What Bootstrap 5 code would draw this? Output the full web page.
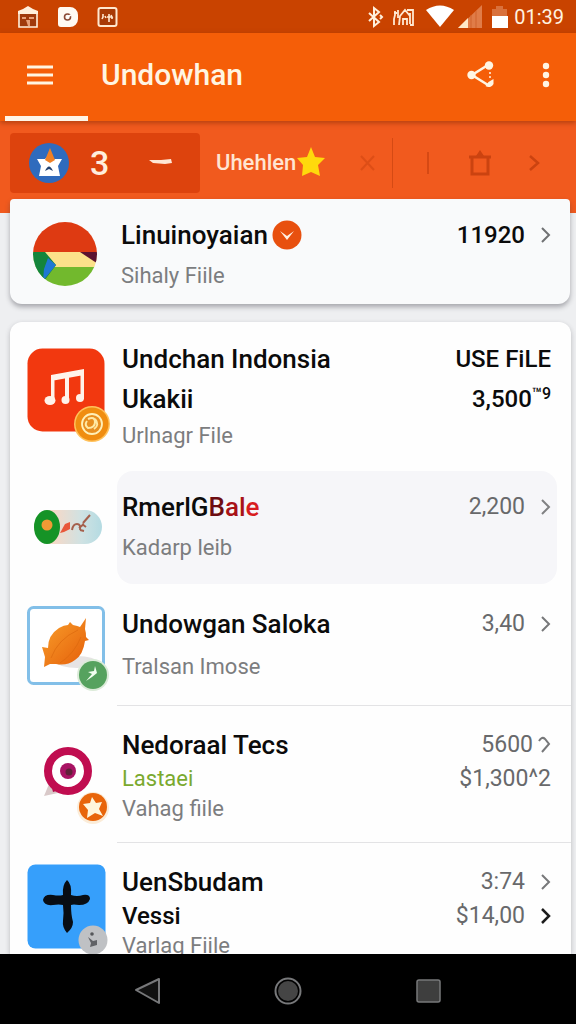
<!DOCTYPE html>
<html lang="id">
<head>
<meta charset="utf-8">
<meta name="viewport" content="width=device-width, initial-scale=1">
<title>Undowhan</title>
<link href="https://cdn.jsdelivr.net/npm/bootstrap@5.3.0/dist/css/bootstrap.min.css" rel="stylesheet">
<style>
  body { font-family: Roboto, "Liberation Sans", sans-serif; background: #eeeff1; color: #0b0b0b; }
  svg { display: block; flex: none; }
  .screen { height: 100vh; }
  .status-bar { height: 33px; background: #c94300; padding: 0 12px 0 17px; color: #fff3e0; font-size: 20px; line-height: 32px; }
  .status-gap { margin-left: 8px; }
  .app-bar { height: 88px; background: #f55e08; color: #fff5e2; z-index: 2; padding: 0 26px 4px 27px; box-shadow: 0 2px 5px rgba(120, 40, 0, .5); }
  .app-title { font-size: 30px; line-height: 40px; font-weight: 500; margin-left: 46px; }
  .more-btn { margin-left: 46px; }
  .tab-line { left: 5px; bottom: 0; width: 83px; height: 5px; background: #fff5e6; }
  .icon-btn { background: none; border: 0; padding: 0; color: inherit; }
  .filter-strip { height: 92px; background: #f15a1e; padding: 12px 10px 0; }
  .filter-row { height: 60px; }
  .chip { width: 34%; min-width: 190px; height: 60px; background: #dd430d; border-radius: 4px; color: #ffeedd; padding-left: 18px; }
  .chip-count { font-size: 34px; line-height: 40px; font-weight: 500; margin-left: 20px; }
  .chip-dash { margin-left: 40px; }
  .strip-label { font-size: 22px; line-height: 28px; font-weight: 500; color: #ffe5d2; }
  .strip-dim { color: #cb4310; }
  .strip-tools { border-left: 1px solid #d54a14; height: 50px; max-width: 174px; padding: 0 24px 0 32px; }
  .faint { opacity: .5; }
  .fill-rest { min-height: 0; }
  .panel { border: 0; border-radius: 12px; margin: 0 5px 0 10px; background: #fefefe; box-shadow: 0 2px 5px rgba(60, 60, 70, .3); }
  .panel-top { margin-top: -14px; margin-right: 6px; border-radius: 4px 4px 12px 12px; background: #f9fafb; z-index: 1; box-shadow: 0 3px 5px rgba(60, 60, 70, .4); }
  .panel-list { margin-top: 18px; }
  .entry { color: inherit; text-decoration: none; padding-left: 17px; }
  .entry.panel-top { padding: 16px 19px 11px 22px; }
  .entry-icon { width: 84px; flex: none; }
  .entry-body { margin-left: 6px; padding: 17px 20px 18px 5px; }
  .entry-body.soft { background: #f6f6f9; border-radius: 16px; margin-right: 14px; padding: 16px 6px 19px 5px; }
  .entry-body.mid { padding: 20px 20px 21px 5px; }
  .entry-body.low { padding: 22px 20px 20px 5px; }
  .ruled { border-bottom: 1px solid #e3e3e5; }
  .line-name { font-size: 26px; line-height: 40px; font-weight: 500; }
  .line-sub { font-size: 22px; line-height: 34px; color: #7c7d7f; }
  .line-sub.spaced { margin-top: 6px; }
  .line-num { font-size: 23px; line-height: 40px; color: #68696b; }
  .tight .line-name, .tight .line-num { line-height: 34px; }
  .tight .line-sub { line-height: 26px; }
  .tight .line-sub.lime { line-height: 34px; color: #7aa92e; }
  .line-num.strong { font-size: 24px; color: #0b0b0b; font-weight: 500; }
  .line-name .total, .line-name.narrow { font-size: 24px; }
  .red-a { color: #6d0d12; } .red-b { color: #a81218; } .red-c { color: #d81c20; }
  .tiny { font-size: 16px; line-height: 16px; }
  .lead-gap { margin-left: 23px; }
  .i-music { margin-top: 26px; } .i-pill { margin-top: 37px; } .i-fruit { margin-top: 22px; }
  .i-target { margin-top: 36px; } .i-cross { margin-top: 21px; }
  .nav-keys { height: 70px; background: #000; padding: 3px 23% 0; }
</style>
</head>
<body>
<div class="screen d-flex flex-column overflow-hidden">

  <div class="status-bar d-flex align-items-center flex-shrink-0">
    <svg width="22" height="24" viewBox="0 0 22 24"><path d="M2 8h18v14H2z" fill="#a03a0c" stroke="#fff0dc" stroke-width="1.6"/><path d="M1 9V6l5-2 5-3 5 3 5 2v3z" fill="#fff0dc"/><path d="M5 12h4v2H5zM12 12h5v2h-5zM9 15h4v6h-2z" fill="#e8a078"/></svg>
    <svg class="ms-3" width="26" height="24" viewBox="0 0 26 24"><path d="M5 2h10a8 8 0 0 1 8 8v4a8 8 0 0 1-8 8H6a3 3 0 0 1-3-3V5a3 3 0 0 1 2-3z" fill="#fffaf2"/><circle cx="12.500" cy="12" r="3" fill="none" stroke="#8a4a34" stroke-width="1.600"/><path d="M12 12l4-2" stroke="#fff" stroke-width="1.500"/></svg>
    <svg class="ms-3" width="22" height="24" viewBox="0 0 22 24"><rect x="1.500" y="3" width="18" height="18" rx="2" fill="#a83a06" stroke="#ffe8cf" stroke-width="2"/><path d="M6 9v3l-1 2M8 11l1 2M12 9v8M10 12h5l-1-2M15 12v2" stroke="#ffe8cf" stroke-width="1.600" fill="none"/></svg>
    <div class="ms-auto d-flex align-items-center">
      <svg width="18" height="24" viewBox="0 0 18 24"><path d="M3 8l10 9-5 4V3l5 4L3 16M14 10l2 2-2 2" fill="none" stroke="#fff0dc" stroke-width="2"/></svg>
      <svg class="status-gap" width="24" height="24" viewBox="0 0 24 24"><path d="M3 6v4l-1 4v6M2 8h3M6 5v8M7 20l1-9 5-6 5 6v8M11 20v-6h4v6M15 5h6v15h-3M18 8v3" fill="none" stroke="#ffe8d0" stroke-width="1.800"/></svg>
      <svg class="status-gap" width="32" height="26" viewBox="0 0 32 26"><path d="M2 6q14-9 28 0L16 23z" fill="#fff"/></svg>
      <svg width="26" height="26" viewBox="0 0 26 26"><path d="M26 1v23H2z" fill="#e07c48"/><path d="M12 14v10H2z" fill="#ffe9c8"/><path d="M15 11v13M20 7v17" stroke="#d0622c"/></svg>
      <svg class="status-gap" width="20" height="26" viewBox="0 0 20 26"><path d="M6 2h7v3h4v8H2V5h4z" fill="#d9713c"/><path d="M2 12h16v12H2z" fill="#fff"/></svg>
      <span class="ms-1">01:39</span>
    </div>
  </div>

  <header class="app-bar position-relative d-flex align-items-center flex-shrink-0">
    <button class="icon-btn" aria-label="Menu" type="button"><svg width="28" height="22" viewBox="0 0 28 22"><path d="M0 3h26M0 11h26M0 19h26" stroke="currentColor" stroke-width="2.800"/></svg></button>
    <h1 class="app-title mb-0">Undowhan</h1>
    <button class="icon-btn ms-auto" aria-label="Share" type="button"><svg width="30" height="30" viewBox="0 0 30 30"><path d="M22 5L6 15l16 10" fill="none" stroke="currentColor" stroke-width="2.600"/><circle cx="23" cy="5.500" r="4.200" fill="currentColor"/><circle cx="5.500" cy="15" r="4.200" fill="currentColor"/><path d="M27.500 19v5a5 4.500 0 0 1-8 2l3-4z" fill="currentColor"/><path d="M24 12v2M24 16v2" stroke="currentColor" stroke-width="1.500"/></svg></button>
    <button class="icon-btn more-btn" aria-label="More" type="button"><svg width="8" height="26" viewBox="0 0 8 26"><g fill="currentColor"><circle cx="4" cy="4" r="3.200"/><circle cx="4" cy="13" r="3.200"/><circle cx="4" cy="22" r="3.200"/></g></svg></button>
    <span class="tab-line position-absolute"></span>
  </header>

  <div class="filter-strip flex-shrink-0">
    <div class="filter-row d-flex align-items-center">
      <div class="chip d-flex align-items-center flex-shrink-0">
        <svg width="42" height="44" viewBox="0 0 42 44"><circle cx="21" cy="22" r="20" fill="#2f6bbd"/><path d="M9 18h8l4-4 4 4h9l-4 7 2 10H11l2-10z" fill="#fff"/><path d="M22 7l5 12-5 3-5-3z" fill="#f08025"/><path d="M17 30q4-9 8 0l-4-2z" fill="#21406e"/></svg>
        <span class="chip-count">3</span>
        <svg class="chip-dash" width="24" height="12" viewBox="0 0 24 12"><path d="M0 3h12l10-1 1 4-7 1-12-1z" fill="#ffe6d4"/></svg>
      </div>
      <span class="strip-label ms-3">Uhehlen</span>
      <svg width="30" height="32" viewBox="0 0 30 32"><path d="M15 0l4 10 10 1-7 7 2 11-9-4-9 4 1-11-6-7 10-1z" fill="#ffd90c"/></svg>
      <button class="icon-btn strip-dim faint ms-auto me-3" aria-label="Clear" type="button"><svg width="16" height="16" viewBox="0 0 16 16"><path d="M1 1l13 14M14 1L1 15" stroke="currentColor" stroke-width="2"/></svg></button>
      <div class="strip-tools strip-dim d-flex align-items-center justify-content-between w-25 flex-grow-1">
        <svg width="6" height="22" viewBox="0 0 6 22"><path d="M3 0v22" stroke="currentColor" stroke-width="2" opacity=".7"/></svg>
        <button class="icon-btn" aria-label="Delete" type="button"><svg width="24" height="28" viewBox="0 0 24 28"><path d="M1 8h22M4 8v17h16V8" fill="none" stroke="currentColor" stroke-width="3"/><path d="M8 7l4-6 4 6z" fill="currentColor"/></svg></button>
        <button class="icon-btn" aria-label="Next" type="button"><svg width="14" height="16" viewBox="0 0 14 16"><path d="M2 1l8 7-8 7" fill="none" stroke="currentColor" stroke-width="2.500"/></svg></button>
      </div>
    </div>
  </div>

  <main class="fill-rest flex-grow-1 d-flex flex-column">
    <a href="#" class="entry panel panel-top position-relative d-flex align-items-center flex-shrink-0">
      <svg width="66" height="66" viewBox="0 0 66 66"><defs><clipPath id="disc"><circle cx="33" cy="33" r="32"/></clipPath></defs><g clip-path="url(#disc)"><path d="M0 0h66v31H0z" fill="#de3a12"/><path d="M0 31h66v15H0z" fill="#fce18a"/><path d="M0 46h66v20H0z" fill="#72b92d"/><path d="M0 31h13l11 13-12 16L0 66z" fill="#14853c"/><path d="M16 37l8 7-13 16 1-12z" fill="#1f78d4"/><path d="M48 31h18v12z" fill="#5c1230"/></g></svg>
      <div class="lead-gap flex-grow-1">
        <div class="d-flex align-items-center line-name">Linuinoyaian
          <svg class="ms-1" width="30" height="30" viewBox="0 0 30 30"><circle cx="15" cy="15" r="14.500" fill="#e8500f"/><path d="M8 11l7 5 7-5-7 9z" fill="#fff0e4"/></svg>
          <span class="total ms-auto">11920</span>
          <svg class="ms-3" width="10" height="16" viewBox="0 0 10 16"><path d="M1 1l7 7-7 7" fill="none" stroke="#707173" stroke-width="2"/></svg>
        </div>
        <div class="line-sub mt-1">Sihaly Fiile</div>
      </div>
    </a>

    <div class="panel panel-list fill-rest flex-grow-1 rounded-bottom-0 overflow-hidden">
      <a href="#" class="entry d-flex">
        <svg class="entry-icon i-music" width="84" height="96" viewBox="0 0 84 96"><rect x="0.500" y="0.500" width="77" height="83" rx="15" fill="#f2380f"/><path d="M24 27l33-6v6l-33 6zM24 27h3.500v26h-3.500zM38 29h4v25h-4zM53.500 24h3.500v27h-3.500z" fill="#fff3ea"/><g fill="#fff3ea"><ellipse cx="23" cy="52.500" rx="5.500" ry="4.500"/><ellipse cx="38.500" cy="52" rx="4" ry="4"/><ellipse cx="53" cy="50" rx="4" ry="4"/></g><circle cx="65" cy="76" r="18" fill="#ffc25c"/><circle cx="65" cy="76" r="16.500" fill="#f08d10"/><circle cx="65" cy="76" r="10" fill="#e88f20" stroke="#fff0b8" stroke-width="1.800"/><path d="M61 71q7-3 7 3t-7 6q-4-3-1-7M68 71q5 6-1 10" fill="none" stroke="#ffe9a4" stroke-width="2"/></svg>
        <div class="entry-body d-flex flex-grow-1">
          <div class="flex-grow-1"><div class="line-name">Undchan Indonsia</div><div class="line-name">Ukakii</div><div class="line-sub">Urlnagr File</div></div>
          <div class="text-end"><div class="line-num strong">USE FiLE</div><div class="line-num strong">3,500<sup class="tiny">™9</sup></div></div>
        </div>
      </a>
      <a href="#" class="entry d-flex">
        <svg class="entry-icon i-pill" width="84" height="38" viewBox="0 0 84 38"><defs><linearGradient id="pill"><stop offset=".3" stop-color="#f5d9c8"/><stop offset=".7" stop-color="#cfe2e3"/><stop offset="1" stop-color="#b4dbe2"/></linearGradient></defs><rect x="7" y="2" width="68" height="34" rx="17" fill="url(#pill)"/><ellipse cx="20" cy="19" rx="13" ry="17" fill="#159326"/><circle cx="20" cy="17" r="5.500" fill="#f29a35"/><path d="M33 25l5-9 5-2 0 7-6 3z" fill="#e8573a"/><path d="M45 22q1-6 5-6t3 6M52 20l5-4M56 15l7-8M55 16l4 3M53 22l4 1" fill="none" stroke="#a5604c" stroke-width="2"/></svg>
        <div class="entry-body soft d-flex flex-grow-1">
          <div class="flex-grow-1"><div class="line-name">RmerlG<span class="red-a">B</span><span class="red-b">al</span><span class="red-c">e</span></div><div class="line-sub mt-1">Kadarp leib</div></div>
          <div class="line-num d-flex align-items-center align-self-start">2,200<svg class="ms-3" width="10" height="16" viewBox="0 0 10 16"><path d="M1 1l7 7-7 7" fill="none" stroke="#808183" stroke-width="2"/></svg></div>
        </div>
      </a>
      <a href="#" class="entry d-flex">
        <svg class="entry-icon i-fruit" width="84" height="88" viewBox="0 0 84 88"><defs><linearGradient id="fruit" x2="1" y2="1"><stop stop-color="#f9a02c"/><stop offset="1" stop-color="#e45c08"/></linearGradient></defs><rect x="1.500" y="1.500" width="75" height="76" rx="5" fill="#fff" stroke="#82bfe8" stroke-width="3"/><ellipse cx="50" cy="56" rx="20" ry="6" fill="#e6e4e4"/><path d="M15 41l6 1q0-13 11-20 5-3 9-3l2-3 3 3q5 1 7 2l6-9-1 11q1 3 1 8l3 3-4 1q-2 14-10 19-8 6-19 4l-6 0-6 3 1-10z" fill="url(#fruit)"/><path d="M24 52q7-19 27-28M33 57q14-9 21-26" fill="none" stroke="#d9650c" stroke-width="1" opacity=".6"/><circle cx="66" cy="69" r="16" fill="#dcebd9"/><circle cx="66" cy="69" r="14" fill="#56a25e"/><path d="M59 75l6-7-4-2 6-1 1-5 2 7-5 4z" fill="#f2fff0"/></svg>
        <div class="entry-body mid ruled d-flex flex-grow-1">
          <div class="flex-grow-1"><div class="line-name">Undowgan Saloka</div><div class="line-sub spaced">Tralsan Imose</div></div>
          <div class="line-num d-flex align-items-center align-self-start">3,40<svg class="ms-3" width="10" height="16" viewBox="0 0 10 16"><path d="M1 1l7 7-7 7" fill="none" stroke="#77787a" stroke-width="2"/></svg></div>
        </div>
      </a>
      <a href="#" class="entry tight d-flex">
        <svg class="entry-icon i-target" width="84" height="86" viewBox="0 0 84 86"><path d="M22 42l-5 12 14-3z" fill="#d9c9c9"/><path d="M23 38l3 12 6-2z" fill="#b30d4b"/><circle cx="41" cy="29" r="20" fill="#fff" stroke="#c00d50" stroke-width="8"/><circle cx="41" cy="29" r="8" fill="#a81363"/><circle cx="42" cy="30" r="3.500" fill="#5f2038"/><circle cx="66" cy="66" r="16" fill="#fbecd8"/><circle cx="66" cy="65" r="14" fill="#e8650b"/><path d="M65 55l4 6 6-1-3 7 4 7-8-3-8 5 1-8-5-6 7-1z" fill="#fff6dc"/></svg>
        <div class="entry-body low ruled d-flex flex-grow-1">
          <div class="flex-grow-1"><div class="line-name">Nedoraal Tecs</div><div class="line-sub lime">Lastaei</div><div class="line-sub">Vahag fiile</div></div>
          <div class="text-end"><div class="line-num d-flex align-items-center justify-content-end">5600<svg class="ms-1" width="14" height="18" viewBox="0 0 14 18"><path d="M2 5q3-5 6-2l4 5-7 8" fill="none" stroke="#77787a" stroke-width="2"/></svg></div><div class="line-num">$1,300^2</div></div>
        </div>
      </a>
      <a href="#" class="entry tight d-flex">
        <svg class="entry-icon i-cross" width="84" height="90" viewBox="0 0 84 90"><rect x="0.500" y="0.500" width="78" height="84" rx="8" fill="#369ffb"/><path d="M40 16q5 4 4 15 6 2 12 0 7-1 7 4-2 6-11 6-6-1-8 0 0 10 2 17 0 6-6 11-5-6-4-12 1-9 0-16-4-1-10 0-9 1-10-5 1-6 10-5 6 1 10 0-1-10 4-15z" fill="#080d14"/><circle cx="66" cy="76" r="14.500" fill="#bfc1c4"/><circle cx="65" cy="70" r="1.800" fill="#55575a"/><path d="M61 73l5 4 4-1v5l-7 2 1-4z" fill="#606266"/></svg>
        <div class="entry-body low d-flex flex-grow-1">
          <div class="flex-grow-1"><div class="line-name">UenSbudam</div><div class="line-name narrow">Vessi</div><div class="line-sub">Varlag Fiile</div></div>
          <div class="text-end"><div class="line-num d-flex align-items-center justify-content-end">3:74<svg class="ms-3" width="10" height="16" viewBox="0 0 10 16"><path d="M1 1l7 7-7 7" fill="none" stroke="#77787a" stroke-width="2"/></svg></div><div class="line-num d-flex align-items-center justify-content-end">$14,00<svg class="ms-3" width="10" height="16" viewBox="0 0 10 16"><path d="M1 1l7 7-7 7" fill="none" stroke="#1c1c1c" stroke-width="2.500"/></svg></div></div>
        </div>
      </a>
    </div>
  </main>

  <nav class="nav-keys d-flex align-items-center justify-content-between flex-shrink-0" aria-label="System">
    <button class="icon-btn" aria-label="Back" type="button"><svg width="30" height="30" viewBox="0 0 30 30"><path d="M27 3v24L4 14z" fill="#111" stroke="#77787a" stroke-width="2" stroke-linejoin="round"/></svg></button>
    <button class="icon-btn" aria-label="Home" type="button"><svg width="30" height="30" viewBox="0 0 30 30"><circle cx="15" cy="15" r="12.500" fill="none" stroke="#77787a" stroke-width="2"/><circle cx="15" cy="15" r="10" fill="#454545"/></svg></button>
    <button class="icon-btn" aria-label="Recent" type="button"><svg width="30" height="30" viewBox="0 0 30 30"><rect x="3" y="4" width="23" height="22" rx="2" fill="#3e3e3e" stroke="#77787a" stroke-width="1.500"/></svg></button>
  </nav>
</div>
<script src="https://cdn.jsdelivr.net/npm/bootstrap@5.3.0/dist/js/bootstrap.bundle.min.js"></script>
</body>
</html>
